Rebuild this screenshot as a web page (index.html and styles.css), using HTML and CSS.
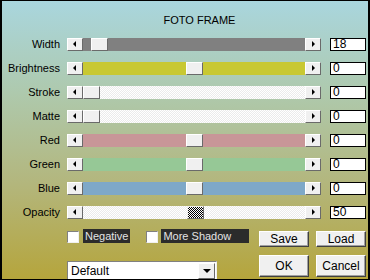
FILE: index.html
```html
<!DOCTYPE html>
<html lang="en">
<head>
  <meta charset="UTF-8">
  <title>Foto Frame</title>
  <link rel="stylesheet" href="styles.css">
</head>
<body>
  <div class="dialog">
    <h1 class="title">FOTO FRAME</h1>

    <div class="row">
      <span class="label">Width</span>
      <div class="slider">
        <span class="btn arrow-left"></span>
        <div class="track gray"><span class="thumb" style="left:8px"></span></div>
        <span class="btn arrow-right"></span>
      </div>
      <div class="value">18</div>
    </div>
    <div class="row">
      <span class="label">Brightness</span>
      <div class="slider">
        <span class="btn arrow-left"></span>
        <div class="track yellow"><span class="thumb" style="left:103px"></span></div>
        <span class="btn arrow-right"></span>
      </div>
      <div class="value">0</div>
    </div>
    <div class="row">
      <span class="label">Stroke</span>
      <div class="slider">
        <span class="btn arrow-left"></span>
        <div class="track white"><span class="thumb" style="left:0px"></span></div>
        <span class="btn arrow-right"></span>
      </div>
      <div class="value">0</div>
    </div>
    <div class="row">
      <span class="label">Matte</span>
      <div class="slider">
        <span class="btn arrow-left"></span>
        <div class="track white"><span class="thumb" style="left:0px"></span></div>
        <span class="btn arrow-right"></span>
      </div>
      <div class="value">0</div>
    </div>
    <div class="row">
      <span class="label">Red</span>
      <div class="slider">
        <span class="btn arrow-left"></span>
        <div class="track red"><span class="thumb" style="left:103px"></span></div>
        <span class="btn arrow-right"></span>
      </div>
      <div class="value">0</div>
    </div>
    <div class="row">
      <span class="label">Green</span>
      <div class="slider">
        <span class="btn arrow-left"></span>
        <div class="track green"><span class="thumb" style="left:103px"></span></div>
        <span class="btn arrow-right"></span>
      </div>
      <div class="value">0</div>
    </div>
    <div class="row">
      <span class="label">Blue</span>
      <div class="slider">
        <span class="btn arrow-left"></span>
        <div class="track blue"><span class="thumb" style="left:103px"></span></div>
        <span class="btn arrow-right"></span>
      </div>
      <div class="value">0</div>
    </div>
    <div class="row">
      <span class="label">Opacity</span>
      <div class="slider">
        <span class="btn arrow-left"></span>
        <div class="track white"><span class="thumb checker" style="left:104px"></span></div>
        <span class="btn arrow-right"></span>
      </div>
      <div class="value">50</div>
    </div>

    <div class="bottom">
      <div class="left-col">
        <div class="options">
          <span class="checkbox"></span><span class="opt-label">Negative</span>
          <span class="checkbox second"></span><span class="opt-label">More Shadow</span>
        </div>
        <div class="dropdown">
          <span class="dd-text">Default</span>
          <span class="btn arrow-down"></span>
        </div>
      </div>
      <div class="buttons">
        <button class="push small">Save</button>
        <button class="push small">Load</button>
        <button class="push big">OK</button>
        <button class="push big">Cancel</button>
      </div>
    </div>
  </div>
</body>
</html>
```

FILE: styles.css
```css
body {
  margin: 0;
}
.dialog {
  width: 370px;
  height: 280px;
  box-sizing: border-box;
  border-top: 1px solid #000;
  border-left: 2px solid #000;
  border-right: 2px solid #000;
  border-bottom: 1px solid #000;
  padding: 12px 2px 0 0;
  overflow: hidden;
  background: linear-gradient(#a9d6de 0%, #aec9ad 33%, #b3b67c 66%, #b5a53c 100%);
  font: 11px "Liberation Sans", Arial, sans-serif;
  color: #000;
}
.title {
  margin: 0 0 10px;
  padding-left: 31px;
  font-size: 11px;
  font-weight: normal;
  line-height: 15px;
  text-align: center;
}
.row {
  display: flex;
  align-items: center;
  height: 13px;
  margin-bottom: 11px;
}
.label {
  width: 58px;
  padding-right: 7px;
  text-align: right;
  line-height: 13px;
}
.slider {
  display: flex;
  width: 254px;
  height: 13px;
}
.btn {
  position: relative;
  flex: none;
  width: 16px;
  height: 13px;
  box-sizing: border-box;
  background: #f0f0f0;
  border: 1px solid;
  border-color: #fff #6a6a6a #6a6a6a #fff;
}
.arrow-left::after,
.arrow-right::after,
.arrow-down::after {
  content: "";
  position: absolute;
  width: 0;
  height: 0;
}
.arrow-left::after {
  left: 5px;
  top: 2px;
  border-top: 3px solid transparent;
  border-bottom: 3px solid transparent;
  border-right: 3px solid #000;
}
.arrow-right::after {
  left: 6px;
  top: 2px;
  border-top: 3px solid transparent;
  border-bottom: 3px solid transparent;
  border-left: 3px solid #000;
}
.track {
  position: relative;
  flex: 1;
  height: 13px;
}
.gray { background: #808080; }
.yellow { background: #c8c832; }
.red { background: #c89698; }
.green { background: #96c896; }
.blue { background: #7ea8c8; }
.white {
  background: repeating-conic-gradient(#fff 0 25%, #ebebeb 0 50%) 0 0 / 2px 2px;
}
.thumb {
  position: absolute;
  top: 0;
  width: 17px;
  height: 13px;
  box-sizing: border-box;
  background: #f0f0f0;
  border: 1px solid;
  border-color: #fff #6a6a6a #6a6a6a #fff;
}
.checker {
  background: repeating-conic-gradient(#000 0 25%, #fff 0 50%) 0 0 / 2px 2px;
  border-color: #f0f0f0 #6a6a6a #6a6a6a #f0f0f0;
}
.value {
  width: 36px;
  height: 13px;
  margin-left: 9px;
  box-sizing: border-box;
  border: 1px solid #000;
  background: #fff;
  padding-left: 2px;
  line-height: 11px;
  font-size: 12px;
}
.bottom {
  display: flex;
  margin-top: -1px;
}
.left-col {
  padding-left: 65px;
}
.options {
  display: flex;
  align-items: center;
  height: 14px;
}
.checkbox {
  width: 12px;
  height: 12px;
  box-sizing: border-box;
  margin-top: 2px;
  background: #fff;
  border: 1px solid;
  border-color: #808080 #f0f0f0 #f0f0f0 #808080;
  margin-right: 4px;
}
.checkbox.second {
  margin-left: 16px;
  margin-right: 3px;
}
.opt-label {
  height: 14px;
  line-height: 14px;
  padding: 0 2px;
  background: #2b2b2b;
  color: #e4e4e4;
}
.checkbox.second + .opt-label {
  width: 84px;
}
.dropdown {
  display: flex;
  align-items: center;
  justify-content: space-between;
  width: 150px;
  height: 20px;
  margin-top: 18px;
  box-sizing: border-box;
  border: 1px solid;
  border-color: #808080 #f0f0f0 #f0f0f0 #808080;
  background: #fff;
  padding-right: 1px;
}
.dd-text {
  padding-left: 3px;
  font-size: 12px;
}
.dropdown .btn {
  width: 17px;
  height: 16px;
}
.arrow-down::after {
  left: 4px;
  top: 5px;
  border-left: 4px solid transparent;
  border-right: 4px solid transparent;
  border-top: 4px solid #000;
}
.buttons {
  display: grid;
  grid-template-columns: 50px 50px;
  grid-template-rows: 16px 22px;
  column-gap: 7px;
  row-gap: 8px;
  margin-left: auto;
  padding-top: 2px;
}
.push {
  margin: 0;
  padding: 0;
  box-sizing: border-box;
  background: #f0f0f0;
  border: 1px solid;
  border-color: #fff #404040 #404040 #fff;
  box-shadow: inset -1px -1px #a0a0a0;
  font: 12px "Liberation Sans", Arial, sans-serif;
  color: #000;
}
```
